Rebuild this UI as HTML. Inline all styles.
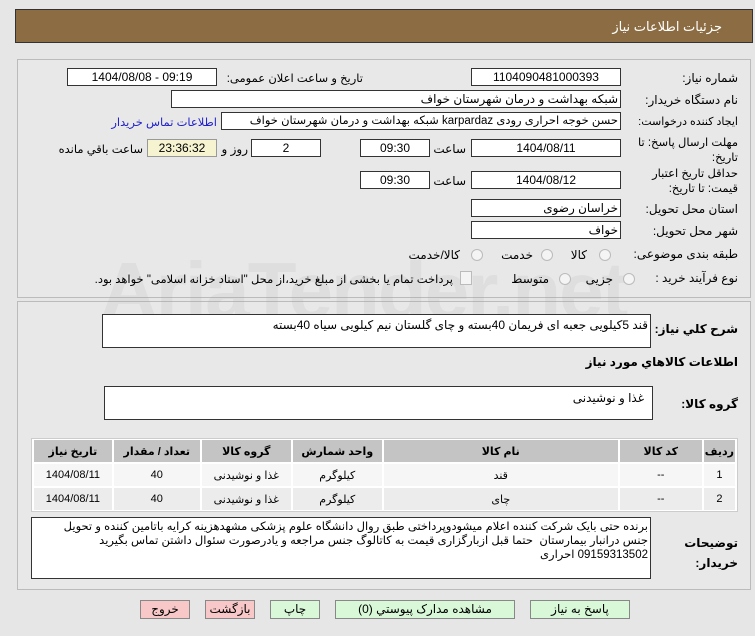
<!DOCTYPE html>
<html><head><meta charset="utf-8"><style>
body{margin:0;width:755px;height:636px;background:#e6e6e6;font-family:"Liberation Sans","DejaVu Sans",sans-serif;font-size:12px;color:#000;position:relative;overflow:hidden}
.a{position:absolute}
.box{position:absolute;background:#fff;border:1px solid #333;box-sizing:border-box;height:18px;line-height:16px;text-align:center;font-size:12px;overflow:hidden;white-space:nowrap}
.l{position:absolute;direction:rtl;text-align:right;white-space:nowrap;font-size:12px}
.btn{position:absolute;top:600px;height:19px;border:1px solid #888;box-sizing:border-box;text-align:center;line-height:17px;font-size:12px}
table{border-collapse:separate;border-spacing:2px;font-size:11px}
td{text-align:center;height:20px}
.rad{position:absolute;width:10px;height:10px;border:1px solid #bbb;border-radius:50%;background:#f4f4f4}
</style></head><body>
<div class="a" style="left:15px;top:9px;width:738px;height:34px;background:#8c6c42;border:1px solid #333;box-sizing:border-box"></div>
<div class="l" style="right:33px;top:19px;color:#fff;font-size:13px">جزئیات اطلاعات نیاز</div>

<div class="a" style="left:17px;top:59px;width:734px;height:239px;border:1px solid #bbb;box-sizing:border-box;background:#e8e8e8"></div>
<div class="a" style="left:17px;top:301px;width:734px;height:289px;border:1px solid #bbb;box-sizing:border-box;background:#e8e8e8"></div>

<div class="a" style="left:100px;top:245px;font-size:80px;font-weight:bold;color:rgba(160,160,160,0.14);letter-spacing:-2px">AriaTender.net</div>

<div class="l" style="right:17px;top:71px">شماره نیاز:</div>
<div class="box" style="left:471px;top:68px;width:150px">1104090481000393</div>
<div class="l" style="right:392px;top:71px;font-size:11.5px">تاریخ و ساعت اعلان عمومی:</div>
<div class="box" style="left:67px;top:68px;width:150px">1404/08/08 - 09:19</div>

<div class="l" style="right:17px;top:93px">نام دستگاه خریدار:</div>
<div class="box" style="left:171px;top:90px;width:450px;text-align:right;direction:rtl;padding-right:2px">شبکه بهداشت و درمان شهرستان خواف</div>

<div class="l" style="right:17px;top:115px;font-size:11px">ایجاد کننده درخواست:</div>
<div class="box" style="left:221px;top:112px;width:400px;text-align:right;direction:rtl;padding-right:2px;font-size:11.5px">حسن خوجه احراری رودی karpardaz شبکه بهداشت و درمان شهرستان خواف</div>
<div class="l" style="right:538px;top:115px;color:#2222cc;font-size:11.5px">اطلاعات تماس خریدار</div>

<div class="l" style="right:17px;top:136px;line-height:15px;font-size:11.5px">مهلت ارسال پاسخ: تا<br>تاریخ:</div>
<div class="box" style="left:471px;top:139px;width:150px">1404/08/11</div>
<div class="l" style="right:289px;top:142px">ساعت</div>
<div class="box" style="left:360px;top:139px;width:70px">09:30</div>
<div class="box" style="left:251px;top:139px;width:70px">2</div>
<div class="l" style="right:507px;top:142px">روز و</div>
<div class="box" style="left:147px;top:139px;width:70px;background:#f5f3d0;border-color:#999">23:36:32</div>
<div class="l" style="right:612px;top:142px;font-size:11.5px">ساعت باقي مانده</div>

<div class="l" style="right:17px;top:167px;line-height:15px;font-size:11.5px">حداقل تاریخ اعتبار<br>قیمت: تا تاریخ:</div>
<div class="box" style="left:471px;top:171px;width:150px">1404/08/12</div>
<div class="l" style="right:289px;top:174px">ساعت</div>
<div class="box" style="left:360px;top:171px;width:70px">09:30</div>

<div class="l" style="right:17px;top:202px">استان محل تحویل:</div>
<div class="box" style="left:471px;top:199px;width:150px;text-align:right;direction:rtl;padding-right:2px">خراسان رضوی</div>
<div class="l" style="right:17px;top:224px">شهر محل تحویل:</div>
<div class="box" style="left:471px;top:221px;width:150px;text-align:right;direction:rtl;padding-right:2px">خواف</div>

<div class="l" style="right:17px;top:247px">طبقه بندی موضوعی:</div>
<div class="rad" style="left:599px;top:249px"></div><div class="l" style="right:168px;top:248px">کالا</div>
<div class="rad" style="left:541px;top:249px"></div><div class="l" style="right:222px;top:248px">خدمت</div>
<div class="rad" style="left:471px;top:249px"></div><div class="l" style="right:295px;top:248px">کالا/خدمت</div>

<div class="l" style="right:17px;top:271px">نوع فرآیند خرید :</div>
<div class="rad" style="left:623px;top:273px"></div><div class="l" style="right:142px;top:272px">جزیی</div>
<div class="rad" style="left:559px;top:273px"></div><div class="l" style="right:206px;top:272px">متوسط</div>
<div class="a" style="left:460px;top:271px;width:10px;height:12px;border:1px solid #bbb;background:#f4f4f4"></div>
<div class="l" style="right:302px;top:272px;font-size:11.5px">پرداخت تمام یا بخشی از مبلغ خرید،از محل "اسناد خزانه اسلامی" خواهد بود.</div>

<div class="l" style="right:17px;top:322px;font-weight:bold">شرح کلي نیاز:</div>
<div class="box" style="left:102px;top:314px;width:549px;height:34px;text-align:right;direction:rtl;padding-right:2px;line-height:20px">قند 5کیلویی جعبه ای فریمان 40بسته و چای گلستان نیم کیلویی سیاه 40بسته</div>
<div class="l" style="right:17px;top:355px;font-weight:bold">اطلاعات کالاهاي مورد نیاز</div>
<div class="l" style="right:17px;top:397px;font-weight:bold">گروه کالا:</div>
<div class="box" style="left:104px;top:386px;width:549px;height:34px;text-align:right;direction:rtl;padding-right:8px;line-height:22px">غذا و نوشیدنی</div>

<div class="a" style="left:31px;top:438px;width:707px;height:74px;border:1px solid #ccc;box-sizing:border-box;background:#fff">
<table style="width:705px;direction:rtl;margin:-1px 0 0 0">
<tr style="background:#c4c4c4;font-weight:bold;height:22px"><td style="width:27px">ردیف</td><td style="width:80px">کد کالا</td><td style="width:232px">نام کالا</td><td style="width:87px">واحد شمارش</td><td style="width:87px">گروه کالا</td><td style="width:84px">تعداد / مقدار</td><td>تاریخ نیاز</td></tr>
<tr style="background:#f6f6f6"><td>1</td><td>--</td><td>قند</td><td>کیلوگرم</td><td>غذا و نوشیدنی</td><td>40</td><td>1404/08/11</td></tr>
<tr style="background:#ececec"><td>2</td><td>--</td><td>چای</td><td>کیلوگرم</td><td>غذا و نوشیدنی</td><td>40</td><td>1404/08/11</td></tr>
</table></div>

<div class="l" style="right:17px;top:533px;font-weight:bold;line-height:20px">توضیحات<br>خریدار:</div>
<div class="box" style="left:31px;top:517px;width:620px;height:62px;text-align:right;direction:rtl;padding:2px 2px 0 4px;line-height:14px;white-space:normal;font-size:11.5px">برنده حتی بایک شرکت کننده اعلام میشودوپرداختی طبق روال دانشگاه علوم پزشکی مشهدهزینه کرایه باتامین کننده و تحویل جنس درانبار بیمارستان&nbsp; حتما قبل ازبارگزاری قیمت به کاتالوگ جنس مراجعه و یادرصورت سئوال داشتن تماس بگیرید 09159313502 احراری</div>

<div class="btn" style="left:140px;width:50px;background:#f8c8c8">خروج</div>
<div class="btn" style="left:205px;width:50px;background:#f8c8c8">بازگشت</div>
<div class="btn" style="left:270px;width:50px;background:#d8f8d8">چاپ</div>
<div class="btn" style="left:335px;width:180px;background:#d8f8d8">مشاهده مدارک پیوستي (0)</div>
<div class="btn" style="left:530px;width:100px;background:#d8f8d8">پاسخ به نیاز</div>
</body></html>
